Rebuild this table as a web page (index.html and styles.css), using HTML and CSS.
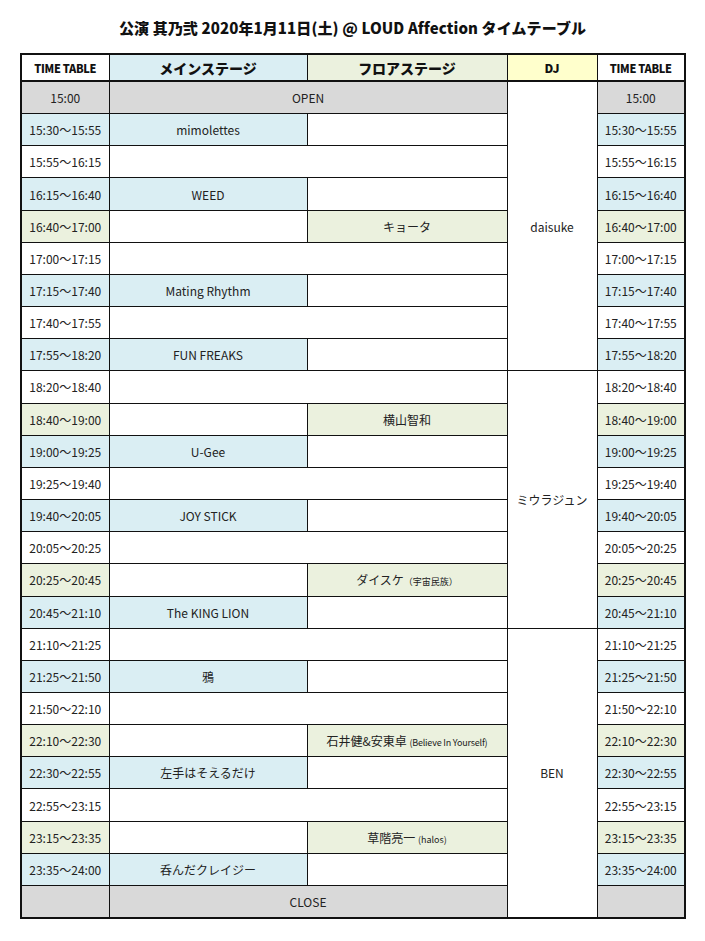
FILE: index.html
```html
<!DOCTYPE html>
<html lang="ja">
<head>
<meta charset="utf-8">
<title>タイムテーブル</title>
<link rel="stylesheet" href="styles.css">
</head>
<body>
<h1 class="title">公演 其乃弐 2020年1月11日(土) @ LOUD Affection タイムテーブル</h1>
<table class="tt">
  <colgroup>
    <col class="c-time"><col class="c-main"><col class="c-floor"><col class="c-dj"><col class="c-time2">
  </colgroup>
  <thead>
    <tr class="head">
      <th class="h-time">TIME TABLE</th>
      <th class="h-main">メインステージ</th>
      <th class="h-floor">フロアステージ</th>
      <th class="h-dj">DJ</th>
      <th class="h-time">TIME TABLE</th>
    </tr>
  </thead>
  <tbody>
    <tr><td class="gray">15:00</td><td class="gray" colspan="2">OPEN</td><td class="dj" rowspan="9">daisuke</td><td class="gray">15:00</td></tr>
    <tr><td class="blue">15:30～15:55</td><td class="blue">mimolettes</td><td></td><td class="blue">15:30～15:55</td></tr>
    <tr><td>15:55～16:15</td><td colspan="2"></td><td>15:55～16:15</td></tr>
    <tr><td class="blue">16:15～16:40</td><td class="blue">WEED</td><td></td><td class="blue">16:15～16:40</td></tr>
    <tr><td class="green">16:40～17:00</td><td></td><td class="green">キョータ</td><td class="green">16:40～17:00</td></tr>
    <tr><td>17:00～17:15</td><td colspan="2"></td><td>17:00～17:15</td></tr>
    <tr><td class="blue">17:15～17:40</td><td class="blue">Mating Rhythm</td><td></td><td class="blue">17:15～17:40</td></tr>
    <tr><td>17:40～17:55</td><td colspan="2"></td><td>17:40～17:55</td></tr>
    <tr><td class="blue">17:55～18:20</td><td class="blue">FUN FREAKS</td><td></td><td class="blue">17:55～18:20</td></tr>
    <tr><td>18:20～18:40</td><td colspan="2"></td><td class="dj" rowspan="8">ミウラジュン</td><td>18:20～18:40</td></tr>
    <tr><td class="green">18:40～19:00</td><td></td><td class="green">横山智和</td><td class="green">18:40～19:00</td></tr>
    <tr><td class="blue">19:00～19:25</td><td class="blue">U-Gee</td><td></td><td class="blue">19:00～19:25</td></tr>
    <tr><td>19:25～19:40</td><td colspan="2"></td><td>19:25～19:40</td></tr>
    <tr><td class="blue">19:40～20:05</td><td class="blue">JOY STICK</td><td></td><td class="blue">19:40～20:05</td></tr>
    <tr><td>20:05～20:25</td><td colspan="2"></td><td>20:05～20:25</td></tr>
    <tr><td class="green">20:25～20:45</td><td></td><td class="green">ダイスケ<span class="sub">（宇宙民族）</span></td><td class="green">20:25～20:45</td></tr>
    <tr><td class="blue">20:45～21:10</td><td class="blue">The KING LION</td><td></td><td class="blue">20:45～21:10</td></tr>
    <tr><td>21:10～21:25</td><td colspan="2"></td><td class="dj" rowspan="9">BEN</td><td>21:10～21:25</td></tr>
    <tr><td class="blue">21:25～21:50</td><td class="blue">鴉</td><td></td><td class="blue">21:25～21:50</td></tr>
    <tr><td>21:50～22:10</td><td colspan="2"></td><td>21:50～22:10</td></tr>
    <tr><td class="green">22:10～22:30</td><td></td><td class="green">石井健&amp;安東卓 <span class="sub narrow">(Believe In Yourself)</span></td><td class="green">22:10～22:30</td></tr>
    <tr><td class="blue">22:30～22:55</td><td class="blue">左手はそえるだけ</td><td></td><td class="blue">22:30～22:55</td></tr>
    <tr><td>22:55～23:15</td><td colspan="2"></td><td>22:55～23:15</td></tr>
    <tr><td class="green">23:15～23:35</td><td></td><td class="green">草階亮一 <span class="sub">(halos)</span></td><td class="green">23:15～23:35</td></tr>
    <tr><td class="blue">23:35～24:00</td><td class="blue">呑んだクレイジー</td><td></td><td class="blue">23:35～24:00</td></tr>
    <tr><td class="gray"></td><td class="gray" colspan="2">CLOSE</td><td class="gray"></td></tr>
  </tbody>
</table>
</body>
</html>
```
FILE: styles.css
```css
html, body {
  margin: 0;
  padding: 0;
  background: #ffffff;
}
body {
  font-family: "Noto Sans CJK JP", "Noto Sans", sans-serif;
  color: #1a1a1a;
}
.title {
  margin: 0;
  height: 53px;
  box-sizing: border-box;
  padding-top: 17px;
  text-align: center;
  font-size: 15px;
  line-height: 22px;
  font-weight: 900;
  color: #111;
  letter-spacing: 0.1px;
}
.tt {
  margin-left: 20px;
  width: 664px;
  border-collapse: collapse;
  table-layout: fixed;
  border: 2px solid #111;
}
.c-time { width: 88px; }
.c-main { width: 198px; }
.c-floor { width: 200px; }
.c-dj { width: 90px; }
.c-time2 { width: 88px; }
.tt th, .tt td {
  border: 1px solid #111;
  padding: 0;
  text-align: center;
  vertical-align: middle;
  white-space: nowrap;
  overflow: hidden;
}
.head th {
  height: 25px;
  border-bottom: 2px solid #111;
  font-weight: 900;
  font-size: 14px;
  color: #111;
}
.head .h-time {
  font-size: 11px;
  letter-spacing: -0.3px;
  background: #ffffff;
}
.head .h-main { background: #daeef3; }
.head .h-floor { background: #ebf1de; }
.head .h-dj { background: #ffffcc; font-size: 12px; }
.tt td {
  height: 31.16px;
  font-size: 12px;
  color: #222;
  background: #ffffff;
}
.tt td.blue { background: #daeef3; }
.tt td.green { background: #ebf1de; }
.tt td.gray { background: #d9d9d9; }
.tt td.dj { background: #ffffff; }
.sub {
  font-size: 9px;
}
.narrow {
  letter-spacing: -0.2px;
}
```
